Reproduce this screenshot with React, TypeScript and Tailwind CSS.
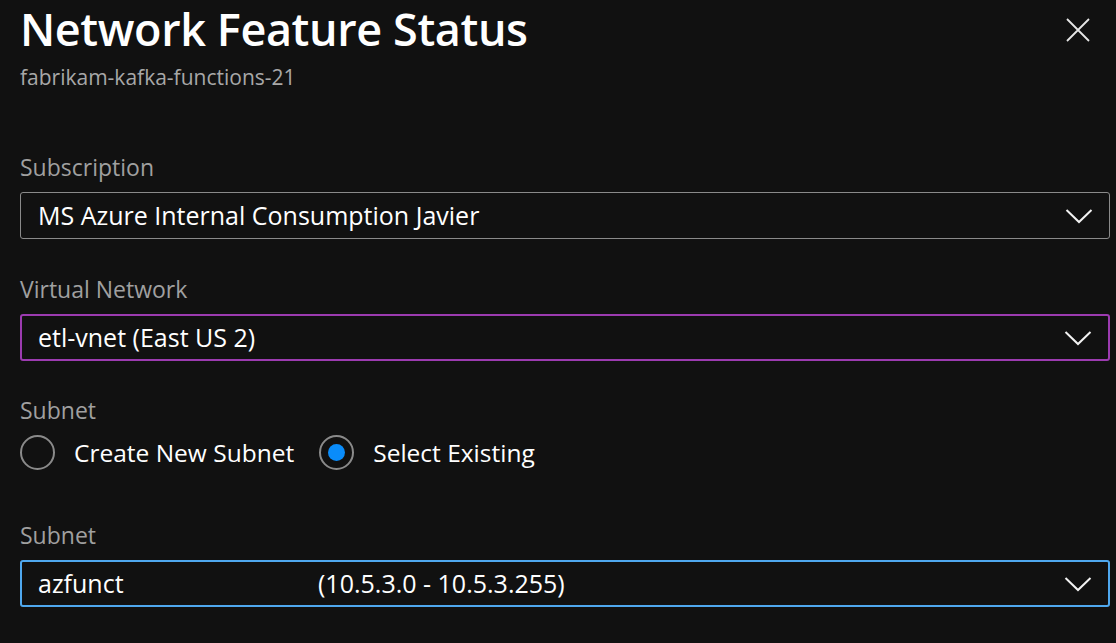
const font = { fontFamily: '"Open Sans", "Noto Sans", sans-serif' };

function Chevron() {
  return (
    <svg width="28" height="16" viewBox="0 0 28 16" fill="none" className="shrink-0">
      <path d="M1.5 2 L14 14 L26.5 2" stroke="#f2f2f2" strokeWidth="2" />
    </svg>
  );
}

function Dropdown({ border, children }: { border: string; children: React.ReactNode }) {
  return (
    <div
      className={`mt-[8px] flex h-[47px] items-center justify-between rounded-[3px] pl-[16px] pr-[16px] text-[25px] text-white ${border}`}
    >
      <div className="flex items-center">{children}</div>
      <Chevron />
    </div>
  );
}

function Radio({ checked, label }: { checked?: boolean; label: string }) {
  return (
    <label className="flex items-center">
      <span className="flex h-[35px] w-[35px] items-center justify-center rounded-full border-2 border-[#8a8a8a]">
        {checked ? <span className="h-[17px] w-[17px] rounded-full bg-[#0a8cfa]" /> : null}
      </span>
      <span className="ml-[19px] text-[24.5px] leading-[35px] text-white">{label}</span>
    </label>
  );
}

const labelCls = "text-[23px] leading-[34px] text-[#a0a0a0]";

export default function App() {
  return (
    <div className="min-h-[643px] w-[1116px] bg-[#111111] pl-[20px] pr-[6px]" style={font}>
      <div className="flex items-start justify-between">
        <h1 className="mt-[-2px] text-[45px] font-semibold leading-[62px] tracking-[-0.4px] text-white">
          Network Feature Status
        </h1>
        <button type="button" className="mr-[20px] mt-[18px]" aria-label="Close">
          <svg width="24" height="24" viewBox="0 0 24 24" fill="none">
            <path d="M1 1 L23 23 M23 1 L1 23" stroke="#e6e6e6" strokeWidth="1.8" />
          </svg>
        </button>
      </div>
      <p className="mt-[3px] text-[21px] leading-[28px] text-[#a8a8a8]">fabrikam-kafka-functions-21</p>

      <div className="mt-[59px]">
        <p className={labelCls}>Subscription</p>
        <Dropdown border="border border-[#8a8a8a] pl-[17px]">MS Azure Internal Consumption Javier</Dropdown>
      </div>

      <div className="mt-[33px]">
        <p className={labelCls}>Virtual Network</p>
        <Dropdown border="border-2 border-[#9c3bb0]">etl-vnet (East US 2)</Dropdown>
      </div>

      <div className="mt-[32px]">
        <p className={labelCls}>Subnet</p>
        <div className="mt-[8px] flex items-center gap-[25px]">
          <Radio label="Create New Subnet" />
          <Radio checked label="Select Existing" />
        </div>
      </div>

      <div className="mt-[48px]">
        <p className={labelCls}>Subnet</p>
        <Dropdown border="border-2 border-[#4fa8ee]">
          <span className="w-[280px]">azfunct</span>
          <span>(10.5.3.0 - 10.5.3.255)</span>
        </Dropdown>
      </div>
    </div>
  );
}
